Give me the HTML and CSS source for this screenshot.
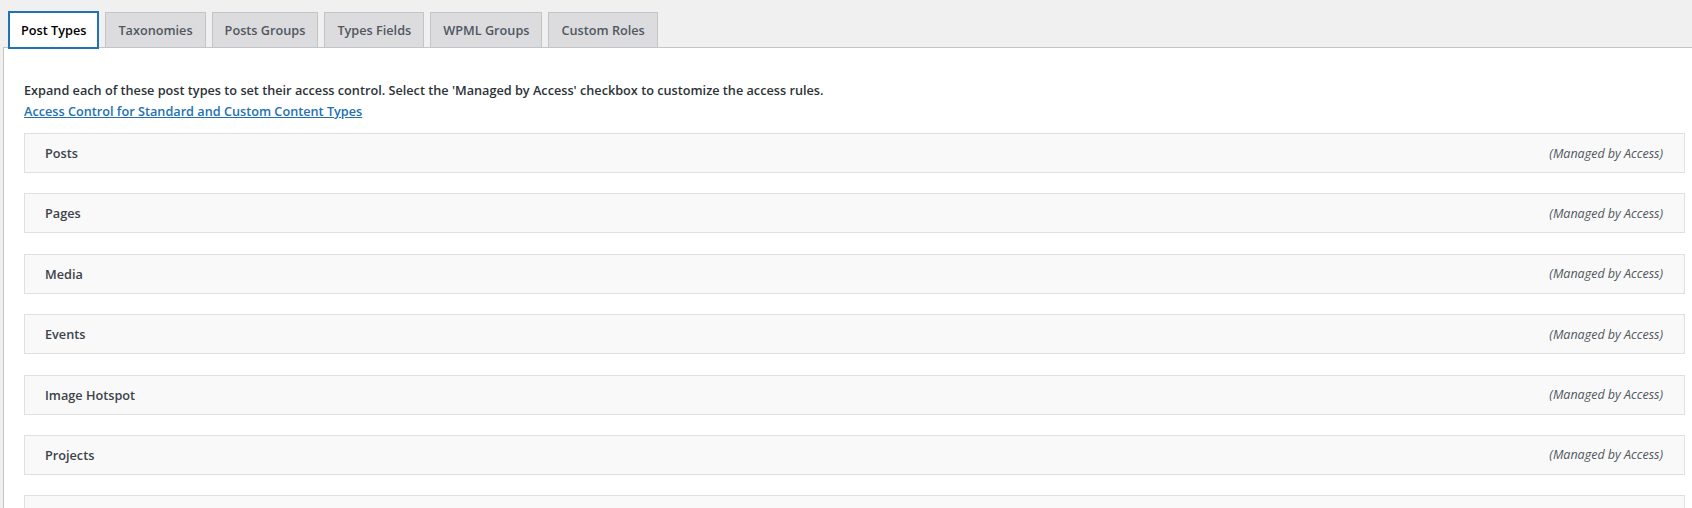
FILE: index.html
```html
<!DOCTYPE html>
<html lang="en">
<head>
    <meta charset="UTF-8">
    <meta name="viewport" content="width=device-width, initial-scale=1.0">
    <title>Access Control</title>
    <link rel="stylesheet" href="styles.css">
</head>
<body>
    <div class="wrap">
        <nav class="tabs">
            <a class="tab tab-active" href="#">Post Types</a>
            <a class="tab" href="#">Taxonomies</a>
            <a class="tab" href="#">Posts Groups</a>
            <a class="tab" href="#">Types Fields</a>
            <a class="tab" href="#">WPML Groups</a>
            <a class="tab" href="#">Custom Roles</a>
        </nav>

        <div class="panel">
            <p class="intro">
                Expand each of these post types to set their access control. Select the 'Managed by Access' checkbox to customize the access rules.<br>
                <a href="#">Access Control for Standard and Custom Content Types</a>
            </p>

            <div class="type-box"><span class="type-name">Posts</span><span class="type-status">(Managed by Access)</span></div>
            <div class="type-box"><span class="type-name">Pages</span><span class="type-status">(Managed by Access)</span></div>
            <div class="type-box"><span class="type-name">Media</span><span class="type-status">(Managed by Access)</span></div>
            <div class="type-box"><span class="type-name">Events</span><span class="type-status">(Managed by Access)</span></div>
            <div class="type-box"><span class="type-name">Image Hotspot</span><span class="type-status">(Managed by Access)</span></div>
            <div class="type-box"><span class="type-name">Projects</span><span class="type-status">(Managed by Access)</span></div>
            <div class="type-box"><span class="type-name"></span><span class="type-status"></span></div>
        </div>
    </div>
</body>
</html>
```

FILE: styles.css
```css
body {
    margin: 0;
    background-color: #f0f0f1; /* admin gray */
    color: #3c434a;
    font-family: 'Open Sans', 'Noto Sans', sans-serif;
    font-size: 13px;
    height: 508px;
    overflow: hidden;
}

.wrap {
    padding-left: 3px;
}

/* tab strip */
.tabs {
    display: flex;
    gap: 6px;
    padding: 12px 0 0 5px;
    position: relative;
    z-index: 1;
}

.tab {
    box-sizing: border-box;
    height: 35px;
    padding: 0 12px;
    display: flex;
    align-items: center;
    background-color: #dcdcde;
    border: 1px solid #c3c4c7;
    border-bottom: none;
    color: #50575e;
    font-weight: 600;
    font-size: 12.7px;
    text-decoration: none;
}

.tab-active {
    height: 38px;
    margin-top: -1px;
    margin-bottom: -2px;
    padding: 0 11px;
    background-color: #fff;
    border: 2px solid #2271b1;
    color: #000;
}

/* white content panel */
.panel {
    background-color: #fff;
    border-top: 1px solid #c3c4c7;
    border-left: 1px solid #c3c4c7;
    padding: 32px 7px 0 20px;
    min-height: 500px;
}

.intro {
    margin: 0 0 11px;
    font-weight: 600;
    font-size: 12.7px;
    line-height: 21px;
    color: #2c3338;
}

.intro a {
    color: #2271b1;
}

.type-box {
    box-sizing: border-box;
    height: 40px;
    margin-bottom: 20.4px;
    padding: 0 21px 0 20px;
    display: flex;
    align-items: center;
    justify-content: space-between;
    background-color: #f9f9f9;
    border: 1px solid #e0e0e0;
}

.type-name {
    font-weight: 600;
    font-size: 12.7px;
    color: #3c434a;
}

.type-status {
    font-style: italic;
    font-size: 12.5px;
    color: #50575e;
}
```
